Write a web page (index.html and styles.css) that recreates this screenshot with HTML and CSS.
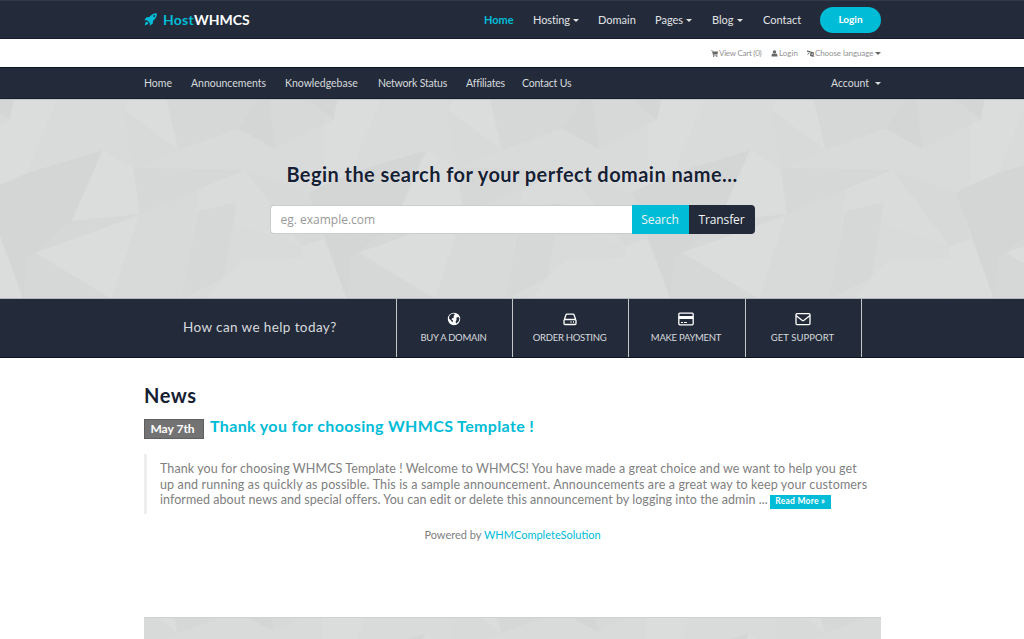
FILE: index.html
```
<!DOCTYPE html>
<html lang="en">
<head>
<meta charset="utf-8">
<title>HostWHMCS</title>
<link rel="stylesheet" href="styles.css">
</head>
<body>
<header class="topbar">
  <div class="container topbar-inner">
    <a class="brand"><svg class="rocket" viewBox="0 0 14 14"><path fill="#00bcd7" d="M13.800.2C10.400 0 8 1.500 5.700 4.200L2.700 4.500.3 7.700l3 .1L6.200 10.700l.1 3.100 3.200-2.400.3-3.100C12.600 6 14 3.600 13.800.2zM3.200 9.200C1.600 9.500 1.100 11.500.8 13.200c1.700-.2 3.600-.8 4-2.400z"/><circle cx="10.900" cy="3.200" r="1" fill="#232b3a"/></svg><span class="brand-a">Host</span><span class="brand-b">WHMCS</span></a>
    <nav class="mainnav">
      <a class="active">Home</a><a class="t-hosting">Hosting<i class="caret"></i></a><a>Domain</a><a>Pages<i class="caret"></i></a><a>Blog<i class="caret"></i></a><a>Contact</a><a class="login">Login</a>
    </nav>
  </div>
</header>
<div class="container utility">
  <a class="u-cart"><svg viewBox="0 0 14 14"><path d="M0 1h3l.5 2H14l-1 6H5l.2 1H13v1H4L2.200 2H0z"/><circle cx="5.500" cy="12.500" r="1.300"/><circle cx="11.500" cy="12.500" r="1.300"/></svg><span>View Cart (0)</span></a>
  <a class="u-login"><svg viewBox="0 0 14 14"><circle cx="7" cy="4" r="3.500"/><path d="M1 13c0-4 1-6 3-6 2 1.500 4 1.500 6 0 2 0 3 2 3 6z"/></svg><span>Login</span></a>
  <a class="u-lang"><svg viewBox="0 0 14 14"><path d="M0 1l7 1.500V4H5.500C5 6 4 8 1 9.500L.5 8.500C2 7.500 3.500 6 4 4H0zM7 3l6.500 1.500V14L6 12zm2 7h2.500L10.300 6z" fill-rule="evenodd"/></svg><span>Choose language</span><i class="caret"></i></a>
</div>
<div class="subbar">
  <nav class="container subnav">
    <a>Home</a><a>Announcements</a><a>Knowledgebase</a><a class="tight">Network Status</a><a class="tight">Affiliates</a><a class="tight">Contact Us</a><a class="account">Account<i class="caret"></i></a>
  </nav>
</div>
<section class="hero">
  <svg class="facets" width="1024" height="199">
    <defs>
      <g id="shapes">
        <path class="dk2" d="M925 0H1012L1000 61Z"/>
        <path class="dk1" d="M500 0H808L825 146 716 85 535 151Z"/>
        <path class="dk2" d="M775 0H808L825 146 716 85Z"/>
        <path class="dk1" d="M808 0H925L1000 61 825 146Z" opacity=".5"/>
        <path class="lt" d="M370 28L390 0H500L535 151Z"/>
        <path class="dk1" d="M370 28L535 151 400 203Z" opacity=".6"/>
        <path class="lt" d="M0 0H170L80 220 0 253Z"/>
        <path class="dk2" d="M80 220L308 151 215 363 105 458 80 478Z"/>
        <path class="lt" d="M308 151L400 203 420 343 215 363Z"/>
        <path class="dk1" d="M400 203L735 210 595 268 420 343Z"/>
        <path class="dk1" d="M215 363L420 343 105 458Z"/>
        <path class="lt" d="M105 458L415 348 335 598Z"/>
        <path class="dk1" d="M105 458L335 598H70L80 478Z"/>
        <path class="dk1" d="M420 343L595 268 545 598H335Z" opacity=".6"/>
        <path class="lt" d="M735 210L905 438 820 408 595 333 600 268Z" opacity=".5"/>
        <path class="dk1" d="M595 333L710 308 680 488 670 533 545 598Z"/>
        <path class="lt" d="M625 598L670 533 725 483 905 473 910 598Z"/>
        <path class="dk1" d="M735 210L925 278 971 418 905 438Z" opacity=".5"/>
        <path class="dk2" d="M925 278L1051 220V478L1041 598Z"/>
        <path class="lt" d="M905 438L971 418 1040 598H910Z" opacity=".6"/>
      </g>
      <pattern id="tile" width="971" height="600" patternUnits="userSpaceOnUse" patternTransform="scale(.3333)">
        <rect width="971" height="600" fill="#d9dbda"/>
        <use href="#shapes"/><use href="#shapes" x="-971"/>
      </pattern>
      <pattern id="tile-low" href="#tile" patternTransform="translate(-1 -35) scale(.3333)"/>
    </defs>
    <rect width="1024" height="199" fill="url(#tile)"/>
  </svg>
  <div class="hero-body">
    <h1>Begin the search for your perfect domain name...</h1>
    <div class="search"><span class="field">eg. example.com</span><span class="btn go">Search</span><span class="btn transfer">Transfer</span></div>
  </div>
</section>
<section class="help">
  <div class="help-title"><span>How can we help today?</span></div>
  <a class="tile"><svg viewBox="0 0 14 14"><circle cx="7" cy="7" r="6.200" fill="#fff"/><path fill="#232b3a" d="M4 2.200l2.500-.7 1.500.8L6.500 4 7 5.500 5.500 6 4.500 7.500 6 8.500 5.500 10.500 4 8.500 2 6.500 2.300 4zM9.500 5.500l2-.5 1 1.500-.7 2.500-2.300 2.500-1-1.500L9.500 8z"/></svg><span>BUY A DOMAIN</span></a>
  <a class="tile"><svg viewBox="0 0 14 14"><path class="line" d="M1 8.500v3q0 1 1 1h10q1 0 1-1v-3q0-1-1-1H2q-1 0-1 1zM1.200 8L3 2.800q.2-.6 1-.6h6q.8 0 1 .6L12.800 8M7.500 10h1M10 10h1"/></svg><span>ORDER HOSTING</span></a>
  <a class="tile"><svg class="wide" viewBox="0 0 16 14"><rect class="line" x=".8" y="1.200" width="14.400" height="11.600" rx="1"/><path fill="#fff" d="M1 4h14v3H1zM3 10h2v1H3zM6 10h3v1H6z"/></svg><span>MAKE PAYMENT</span></a>
  <a class="tile"><svg class="wide" viewBox="0 0 16 14"><rect class="line" x="1" y="1.600" width="14" height="11" rx="1"/><path class="line" d="M1 3.500l6 4.800q1 .8 2 0l6-4.800"/></svg><span class="h-sup">GET SUPPORT</span></a>
  <div class="help-end"></div>
</section>
<main class="container">
  <h2>News</h2>
  <div class="headline"><span class="date">May 7th</span><a>Thank you for choosing WHMCS Template !</a></div>
  <blockquote>
    <div class="l1">Thank you for choosing WHMCS Template ! Welcome to WHMCS! You have made a great choice and we want to help you get</div>
    <div class="l2">up and running as quickly as possible. This is a sample announcement. Announcements are a great way to keep your customers</div>
    <div class="l3"><span>informed about news and special offers. You can edit or delete this announcement by logging into the admin ...</span><a class="more">Read More »</a></div>
  </blockquote>
  <p class="powered">Powered by <a>WHMCompleteSolution</a></p>
  <svg class="lower" width="737" height="22"><g transform="translate(-144 0)"><rect x="144" width="737" height="22" fill="url(#tile-low)"/></g></svg>
</main>
</body>
</html>
```
FILE: styles.css
```
* { box-sizing: border-box; }
body { margin: 0; height: 639px; overflow: hidden; background: #fff; color: #808080; font-family: Lato, "Open Sans", sans-serif; font-size: 11px; white-space: nowrap; }
.container { width: 737px; margin-left: 144px; }
h1, h2, p, blockquote { margin: 0; }
.caret { display: inline-block; border: 3px solid transparent; border-top-color: currentColor; border-bottom: 0; margin-left: 3px; vertical-align: 2px; }

.topbar { height: 39px; background: #232b3a; border-top: 1px solid #303a4a; border-bottom: 1px solid #141d2c; }
.topbar-inner { display: flex; justify-content: space-between; height: 37px; }
.brand { display: flex; align-items: center; font-size: 14px; font-weight: 700; }
.rocket { width: 13px; height: 13px; margin-right: 6px; }
.brand-a { color: #00bcd7; letter-spacing: .25px; }
.brand-b { color: #fff; }
.mainnav { display: grid; grid-template-columns: 49px 65px 57px 57px 51px 57px 61px; align-items: center; color: #e0e2e5; }
.mainnav a { padding-bottom: 1px; }
.mainnav .active { color: #00bcd7; font-weight: 700; }
.mainnav .login { height: 26px; padding: 0; line-height: 25px; border-radius: 13px; background: #00bcd7; color: #fff; font-size: 10px; font-weight: 700; text-align: center; }
.t-hosting { letter-spacing: -.1px; }

.utility { height: 28px; display: flex; justify-content: flex-end; align-items: center; font-size: 8px; color: #929292; }
.utility a { display: flex; align-items: center; }
.utility svg { width: 7px; height: 7px; margin-right: 1px; fill: #666; }
.u-cart { width: 60px; letter-spacing: -.25px; }
.u-login { width: 36px; }
.u-lang { width: 74px; letter-spacing: -.1px; }
.utility .caret { color: #666; margin-left: auto; }

.subbar { height: 32px; background: #232b3a; border-top: 1px solid #0c1526; border-bottom: 1px solid #141d2c; }
.subnav { display: grid; grid-template-columns: 47px 94px 93px 88px 56px 1fr auto; align-items: center; height: 29px; color: #d7dade; font-size: 10.500px; letter-spacing: -.02px; }
.tight { letter-spacing: -.18px; }
.account .caret { margin-left: 6px; }

.hero { position: relative; height: 200px; border-top: 1px solid #c5c8cb; border-bottom: 1px solid #b4b8bc; }
.facets { position: absolute; left: 0; top: 0; height: 198px; }
.dk1 { fill: #d6d8d7; }
.dk2 { fill: #d4d6d5; }
.lt { fill: #dbdddc; }
.hero-body { position: relative; display: flex; flex-direction: column; align-items: center; padding-top: 61px; }
h1 { font-size: 20px; line-height: 26px; font-weight: 700; letter-spacing: .44px; color: #152033; text-shadow: 0 0 1px #fff; }
.search { display: flex; width: 485px; height: 29px; margin-top: 18px; line-height: 29px; font-family: "Open Sans", sans-serif; font-size: 12px; }
.field { flex: 1; padding-left: 10px; background: #fff; border: 1px solid #ccc; border-right: 0; border-radius: 4px 0 0 4px; line-height: 27px; color: #999; }
.btn { color: #f2f4f5; text-align: center; letter-spacing: -.1px; }
.go { width: 57px; background: #00bcd7; }
.transfer { width: 66px; background: #232b3a; border-radius: 0 4px 4px 0; }

.help { display: grid; grid-template-columns: 396px 116px 116px 117px 116px 1fr; height: 59px; background: #232b3a; border-bottom: 1px solid #0c1526; color: #d7dade; }
.help-title { display: flex; align-items: center; padding-left: 183px; font-size: 13.500px; letter-spacing: .4px; }
.help-title span { margin-top: -2px; }
.tile { display: flex; flex-direction: column; align-items: center; padding: 13px 2px 0 0; border-left: 1px solid #c5c8cb; font-size: 9.500px; line-height: 12px; letter-spacing: -.27px; }
.h-sup { letter-spacing: .08px; }
.tile svg { width: 14px; height: 14px; margin-bottom: 6px; }
.tile .wide { width: 16px; }
.line { fill: none; stroke: #fff; stroke-width: 1.300; }
.help-end { border-left: 1px solid #c5c8cb; }

h2 { margin-top: 25px; font-size: 20px; line-height: 24px; font-weight: 700; letter-spacing: .6px; color: #152033; }
.headline { display: flex; align-items: flex-start; margin-top: 8px; font-size: 16px; line-height: 22px; font-weight: 700; letter-spacing: .36px; color: #00bcd7; }
.date { width: 60px; height: 20px; margin: 4px 6px 0 0; padding-right: 3px; border: 1px solid #5f5f5f; background: #737373; color: #fff; font-size: 12px; line-height: 17px; letter-spacing: 0; text-align: center; }
blockquote { height: 60px; margin-top: 15px; padding: 7px 0 0 13px; border-left: 3px solid #eee; font-size: 12.500px; line-height: 15.500px; }
.l1 { letter-spacing: .08px; }
.l2 { letter-spacing: .14px; }
.l3 { display: flex; letter-spacing: .055px; }
.more { width: 61px; height: 14px; margin: 3px 0 0 2px; background: #00bcd7; color: #fff; font-size: 8.500px; line-height: 13px; font-weight: 700; letter-spacing: .25px; text-align: center; }
.powered { margin-top: 14px; line-height: 14px; text-align: center; }
.powered a { color: #00bcd7; }
.lower { display: block; margin-top: 75px; border-top: 1px solid #d0d2d1; }
```
